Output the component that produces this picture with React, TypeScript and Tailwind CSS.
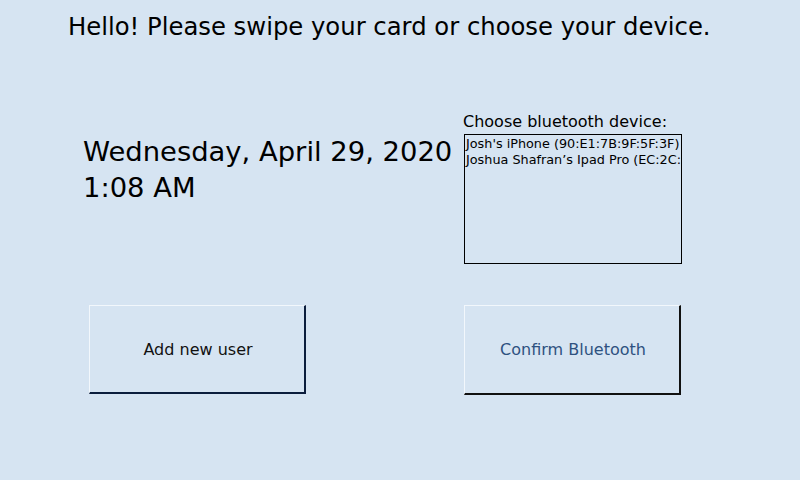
import React from "react";

const devices = [
  "Josh's iPhone (90:E1:7B:9F:5F:3F)",
  "Joshua Shafran’s Ipad Pro (EC:2C:73:1A:4B:90)",
];

export default function App() {
  return (
    <div className="w-[800px] h-[480px] bg-[#d6e4f2] text-black overflow-hidden font-['DejaVu_Sans',sans-serif]">
      {/* Greeting */}
      <h1 className="pt-[13px] pl-[68px] text-[24.3px] leading-[28px] whitespace-nowrap">
        Hello! Please swipe your card or choose your device.
      </h1>

      {/* Date + device list */}
      <div className="flex mt-[71px]">
        <div className="w-[463px] shrink-0 pl-[83px] pt-[22px] text-[27.4px] leading-[36px] whitespace-nowrap">
          <p>Wednesday, April 29, 2020</p>
          <p>1:08 AM</p>
        </div>
        <div className="flex flex-col">
          <label className="text-[16px] leading-[20px] whitespace-nowrap">Choose bluetooth device:</label>
          <ul className="ml-[1px] mt-[2px] w-[218px] h-[130px] border border-black overflow-hidden pl-[1px] pt-[1px] text-[12.8px] leading-[16px] whitespace-nowrap">
            {devices.map((d) => (
              <li key={d}>{d}</li>
            ))}
          </ul>
        </div>
      </div>

      {/* Buttons */}
      <div className="flex mt-[41px]">
        <button className="ml-[89px] w-[217px] h-[89px] pt-[2px] pl-[2px] bg-[#d6e4f2] border-t border-l border-t-[#f2f7fc] border-l-[#f2f7fc] border-b-2 border-r-2 border-b-[#0b1d3d] border-r-[#0b1d3d] text-[16px] text-[#111]">
          Add new user
        </button>
        <button className="ml-[158px] w-[217px] h-[90px] pl-[2px] bg-[#d6e4f2] border-t border-l border-t-[#f2f7fc] border-l-[#f2f7fc] border-b-2 border-r-2 border-b-[#111] border-r-[#111] text-[16px] text-[#2e5180]">
          Confirm Bluetooth
        </button>
      </div>
    </div>
  );
}
